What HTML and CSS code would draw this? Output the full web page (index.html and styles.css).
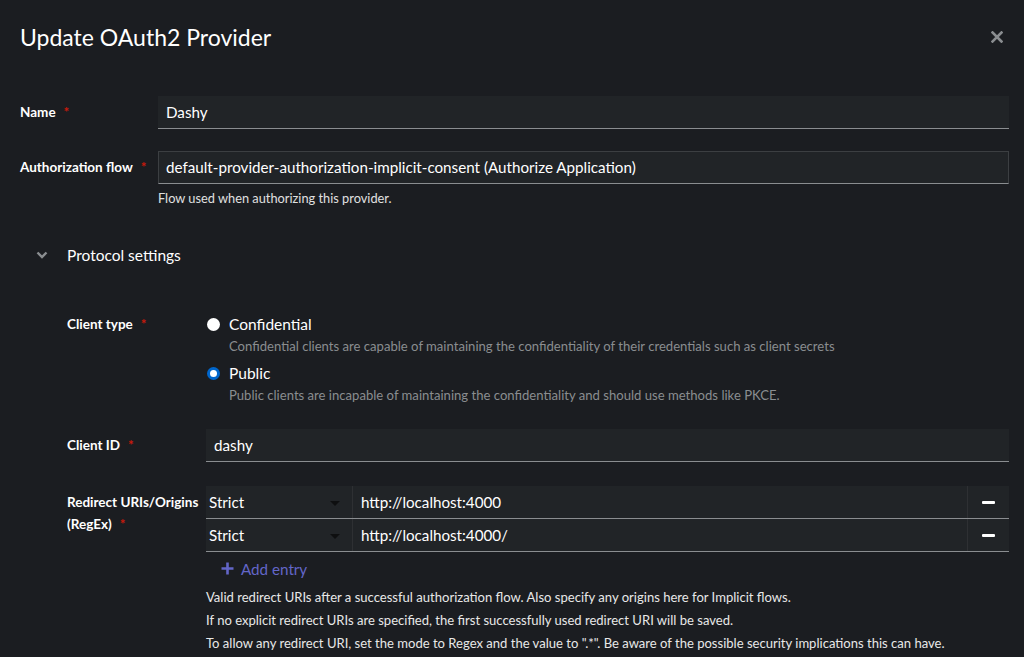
FILE: index.html
```html
<!DOCTYPE html>
<html>
<head>
<meta charset="utf-8">
<link rel="stylesheet" href="styles.css">
</head>
<body>
<div class="modal">
  <header class="header">
    <h1 class="title">Update OAuth2 Provider</h1>
    <button class="close" aria-label="Close">
      <svg width="12" height="12" viewBox="0 0 12 12"><path d="M1.5 1.5 L10.5 10.5 M10.5 1.5 L1.5 10.5" stroke="#8a8d90" stroke-width="2.6" stroke-linecap="square"/></svg>
    </button>
  </header>
  <form class="form">
    <div class="row">
      <label class="label">Name<span class="req">*</span></label>
      <div class="control"><div class="input">Dashy</div></div>
    </div>
    <div class="row row-auth">
      <label class="label">Authorization flow<span class="req">*</span></label>
      <div class="control">
        <div class="input">default-provider-authorization-implicit-consent (Authorize Application)</div>
        <div class="helper">Flow used when authorizing this provider.</div>
      </div>
    </div>
    <div class="section">
      <div class="section-toggle">
        <svg class="chev" width="12" height="8" viewBox="0 0 12 8"><path d="M1.5 1.5 L6 6 L10.5 1.5" fill="none" stroke="#8a8d90" stroke-width="2.4"/></svg>
        <span>Protocol settings</span>
      </div>
      <div class="section-body">
        <div class="row row-client">
          <label class="label">Client type<span class="req">*</span></label>
          <div class="control">
            <div class="radio">
              <span class="dot"></span>
              <div>
                <div class="radio-label">Confidential</div>
                <div class="radio-desc">Confidential clients are capable of maintaining the confidentiality of their credentials such as client secrets</div>
              </div>
            </div>
            <div class="radio">
              <span class="dot on"></span>
              <div>
                <div class="radio-label">Public</div>
                <div class="radio-desc">Public clients are incapable of maintaining the confidentiality and should use methods like PKCE.</div>
              </div>
            </div>
          </div>
        </div>
        <div class="row row-id">
          <label class="label">Client ID<span class="req">*</span></label>
          <div class="control"><div class="input">dashy</div></div>
        </div>
        <div class="row row-redirect">
          <label class="label"><span class="lbl-line">Redirect URIs/Origins</span> <span class="lbl-line">(RegEx)<span class="req">*</span></span></label>
          <div class="control">
            <div class="uri-row">
              <div class="select">Strict<span class="caret"></span></div>
              <div class="uri">http://localhost:4000</div>
              <div class="minus"><span></span></div>
            </div>
            <div class="uri-row">
              <div class="select">Strict<span class="caret"></span></div>
              <div class="uri">http://localhost:4000/</div>
              <div class="minus"><span></span></div>
            </div>
            <div class="add">
              <svg width="13" height="13" viewBox="0 0 13 13"><path d="M6.5 0.5 V12.5 M0.5 6.5 H12.5" stroke="#6366c8" stroke-width="2.6"/></svg>
              <span>Add entry</span>
            </div>
            <div class="helps">
              <p class="help">Valid redirect URIs after a successful authorization flow. Also specify any origins here for Implicit flows.</p>
              <p class="help">If no explicit redirect URIs are specified, the first successfully used redirect URI will be saved.</p>
              <p class="help">To allow any redirect URI, set the mode to Regex and the value to ".*". Be aware of the possible security implications this can have.</p>
            </div>
          </div>
        </div>
      </div>
    </div>
  </form>
</div>
</body>
</html>
```
FILE: styles.css
```css
* { box-sizing: border-box; }
html, body { margin: 0; padding: 0; }
body {
  background: #1b1d21;
  color: #ffffff;
  font-family: Lato, "Liberation Sans", sans-serif;
  font-size: 15px;
  width: 1024px;
  height: 657px;
  overflow: hidden;
}
.modal { padding: 0 15px 0 20px; }
.header {
  display: flex;
  align-items: center;
  justify-content: space-between;
  height: 74px;
}
.title {
  margin: 0;
  font-size: 23px;
  font-weight: 400;
}
.close {
  background: none;
  border: 0;
  padding: 0;
  margin-right: 4px;
  width: 16px;
  height: 16px;
  display: flex;
  align-items: center;
  justify-content: center;
}
.form { margin-top: 22px; }
.row {
  display: grid;
  grid-template-columns: 138px 1fr;
  align-items: start;
}
.label {
  font-size: 13.5px;
  font-weight: 700;
  line-height: 33px;
}
.req { color: #c9190b; margin-left: 8px; }
.input {
  height: 33px;
  background: #212427;
  border-bottom: 1px solid #8a8d90;
  padding: 0 8px;
  line-height: 32px;
  font-size: 15.2px;
  white-space: nowrap;
}
.row-auth { margin-top: 22px; }
.row-auth .input { border: 1px solid #3c3f42; border-bottom-color: #8a8d90; padding: 0 7px; line-height: 30px; }
.helper {
  font-size: 12.8px;
  margin-top: 4px;
  line-height: 20px;
  color: #e0e0e0;
}
.section { margin-top: 32px; }
.section-toggle {
  display: flex;
  align-items: center;
  height: 30px;
  font-size: 15.5px;
}
.chev { margin-left: 16px; margin-right: 19px; }
.section-body { padding-left: 47px; margin-top: 43px; }
.row-client { grid-template-columns: 139px 1fr; }
.row-client .label { line-height: 22px; margin-top: 0; }
.radio { display: flex; align-items: flex-start; margin-bottom: 5px; }
.dot {
  width: 13px;
  height: 13px;
  border-radius: 50%;
  background: #fff;
  margin: 5px 9px 0 1px;
  flex: none;
}
.dot.on {
  background: #fff;
  border: 3px solid #0066cc;
  box-shadow: inset 0 0 0 1px #fff;
}
.radio-label { font-size: 15.5px; line-height: 22px; }
.radio-desc { font-size: 13.1px; line-height: 22px; color: #8a8d90; }
.row-id { grid-template-columns: 139px 1fr; margin-top: 18px; }
.row-redirect { grid-template-columns: 139px 1fr; margin-top: 24px; }
.row-redirect .label { line-height: 22px; margin-top: 5px; }
.lbl-line { display: block; white-space: nowrap; }
.uri-row {
  display: flex;
  height: 33px;
  background: #212427;
  border-bottom: 1px solid #8a8d90;
  font-size: 15.2px;
}
.select {
  width: 147px;
  padding: 0 3px;
  line-height: 32px;
  position: relative;
  border-right: 1px solid #2e3033;
}
.caret {
  position: absolute;
  right: 12px;
  top: 15px;
  border-left: 5px solid transparent;
  border-right: 5px solid transparent;
  border-top: 5px solid #0e0f10;
}
.uri { flex: 1; padding: 0 8px; line-height: 32px; }
.minus {
  width: 42px;
  border-left: 1px solid #2e3033;
  display: flex;
  align-items: center;
  justify-content: center;
}
.minus span { width: 13px; height: 3px; background: #fff; border-radius: 1px; }
.add {
  display: flex;
  align-items: center;
  gap: 7px;
  padding-left: 15px;
  height: 33px;
  color: #6366c8;
  font-size: 15.2px;
}
.helps { margin-top: 1px; }
.help {
  margin: 0;
  font-size: 13.05px;
  line-height: 23px;
  color: #e8e8e8;
}
```
